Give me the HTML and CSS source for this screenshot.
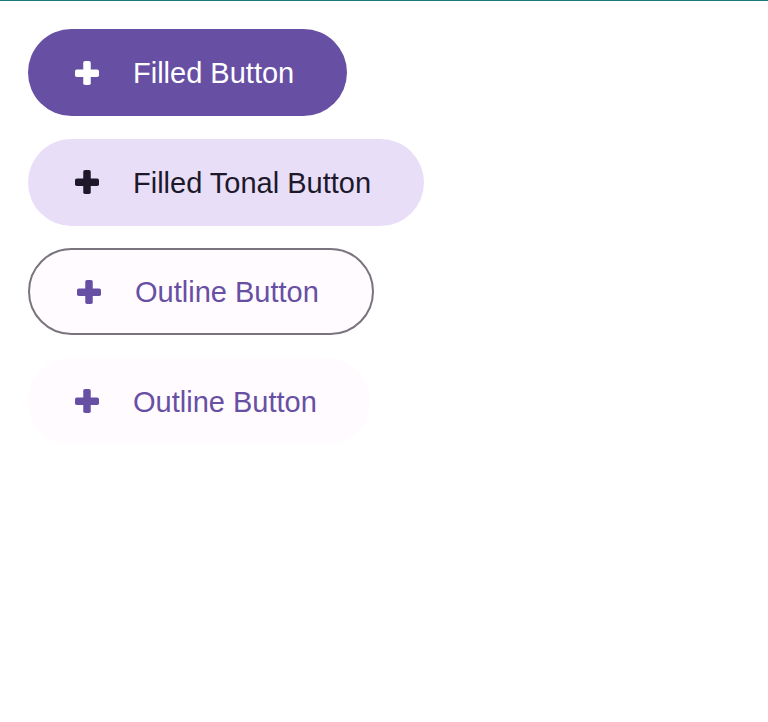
FILE: index.html
```html
<!DOCTYPE html>
<html>
<head>
<meta charset="utf-8">
<link rel="stylesheet" href="styles.css">
</head>
<body>
<div class="topline"></div>
<main class="stack">
  <button class="btn filled">
    <svg class="plus" viewBox="0 0 24 24"><rect x="0" y="8.5" width="24" height="7.5" rx="1.8"/><rect x="8.25" y="0" width="7.5" height="24" rx="1.8"/></svg>
    <span class="label">Filled Button</span>
  </button>
  <button class="btn tonal">
    <svg class="plus" viewBox="0 0 24 24"><rect x="0" y="8.5" width="24" height="7.5" rx="1.8"/><rect x="8.25" y="0" width="7.5" height="24" rx="1.8"/></svg>
    <span class="label">Filled Tonal Button</span>
  </button>
  <button class="btn outline">
    <svg class="plus" viewBox="0 0 24 24"><rect x="0" y="8.5" width="24" height="7.5" rx="1.8"/><rect x="8.25" y="0" width="7.5" height="24" rx="1.8"/></svg>
    <span class="label">Outline Button</span>
  </button>
  <button class="btn plain">
    <svg class="plus" viewBox="0 0 24 24"><rect x="0" y="8.5" width="24" height="7.5" rx="1.8"/><rect x="8.25" y="0" width="7.5" height="24" rx="1.8"/></svg>
    <span class="label">Outline Button</span>
  </button>
</main>
</body>
</html>
```
FILE: styles.css
```css
html, body {
  margin: 0;
  padding: 0;
  background: #ffffff;
}

.topline {
  height: 1px;
  background: #187a7e;
}

.stack {
  display: flex;
  flex-direction: column;
  align-items: flex-start;
  gap: 22.5px;
  padding: 28px 0 0 28px;
}

.btn {
  display: flex;
  align-items: center;
  gap: 34px;
  height: 87px;
  box-sizing: content-box;
  padding: 0 53px 0 47px;
  border: none;
  border-radius: 44px;
  font-family: "Liberation Sans", Arial, sans-serif;
  font-size: 29px;
  line-height: 1;
  cursor: pointer;
}

.label {
  padding-top: 2px;
}

.plus {
  width: 24px;
  height: 24px;
  flex: none;
  fill: currentColor;
}

.filled {
  background: #6750a4;
  color: #ffffff;
}

.tonal {
  background: #e8def8;
  color: #1d192b;
}

.outline {
  background: #fffbfe;
  color: #6750a4;
  border: 2px solid #79747e;
  height: 83px;
}

.plain {
  background: #fffbfe;
  color: #6750a4;
}
```
